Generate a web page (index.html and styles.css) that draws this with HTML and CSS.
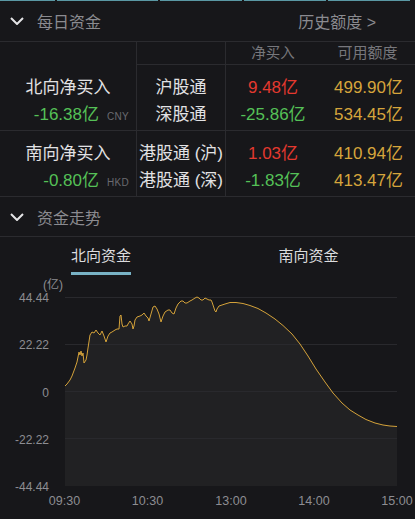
FILE: index.html
```html
<!DOCTYPE html>
<html lang="zh-CN">
<head>
<meta charset="utf-8">
<title>每日资金</title>
<link rel="stylesheet" href="styles.css">
</head>
<body>
<div class="topline"><i></i><i></i><i></i><i></i><i></i></div>

<div class="sec-head">
  <svg class="chev" width="14" height="8" viewBox="0 0 14 8"><path d="M1 1 L7 7 L13 1" fill="none" stroke="#e4e4e6" stroke-width="2" stroke-linejoin="miter"/></svg>
  <span class="sec-title">每日资金</span>
  <span class="sec-link">历史额度 &gt;</span>
</div>

<div class="table">
  <div class="c c1 hd"></div>
  <div class="c c2 hd bb"></div>
  <div class="c c3 hd bb">净买入</div>
  <div class="c c4 hd bb">可用额度</div>

  <div class="c c1 bb">
    <div class="ln">北向净买入</div>
    <div class="ln net"><span class="green">-16.38亿</span><span class="cur">CNY</span></div>
  </div>
  <div class="c c2 bb">
    <div class="ln">沪股通</div>
    <div class="ln">深股通</div>
  </div>
  <div class="c c3 bb">
    <div class="ln red">9.48亿</div>
    <div class="ln green">-25.86亿</div>
  </div>
  <div class="c c4 bb">
    <div class="ln gold">499.90亿</div>
    <div class="ln gold">534.45亿</div>
  </div>

  <div class="c c1 bb">
    <div class="ln">南向净买入</div>
    <div class="ln net"><span class="green">-0.80亿</span><span class="cur">HKD</span></div>
  </div>
  <div class="c c2 bb">
    <div class="ln">港股通 (沪)</div>
    <div class="ln">港股通 (深)</div>
  </div>
  <div class="c c3 bb">
    <div class="ln red">1.03亿</div>
    <div class="ln green">-1.83亿</div>
  </div>
  <div class="c c4 bb">
    <div class="ln gold">410.94亿</div>
    <div class="ln gold">413.47亿</div>
  </div>
</div>

<div class="sec-head sec-head2">
  <svg class="chev" width="14" height="8" viewBox="0 0 14 8"><path d="M1 1 L7 7 L13 1" fill="none" stroke="#e4e4e6" stroke-width="2"/></svg>
  <span class="sec-title">资金走势</span>
</div>

<div class="tabs">
  <div class="tab"><span class="tab-txt active">北向资金</span></div>
  <div class="tab"><span class="tab-txt">南向资金</span></div>
</div>

<svg class="chart" width="415" height="244" viewBox="0 275 415 244">
  <polygon class="area" points="65,386 67,384 70,380 72,376 75,368 77,362 79,352 80,355 81,351 82,356 83,353 84,363 86,360 87,355 88,348 90,335 92,332 94,333 96,330 98,333 100,335 102,331 104,336 106,342 108,336 110,333 112,332 115,330 117,329 119,329 120,316 121,315 122,324 123,327 125,326 127,326 128,324 130,321 132,324 133,329 134,326 135,320 137,317 140,316 142,315 144,313 146,316 148,318 149,321 151,314 153,307 155,306 157,309 159,314 160,318 161,322 163,316 165,312 168,310 170,310 172,313 174,314 176,308 178,304 181,301 183,301 185,303 187,303 190,301 192,300 195,298 197,297 199,298 201,300 203,300 205,298 207,299 209,300 211,300 212,302 213,305 215,311 216,312 217,309 219,306 222,305 225,304 230,302.5 236,302.5 243,303.5 250,305.5 258,308.5 266,313 275,319 283,325.5 292,334 300,344 308,356 316,369 325,382 333,393 342,403 350,410 358,415 366,419.5 375,423 383,425 390,426 397,426.5 397,486 65,486"/>
  <g class="grid">
    <line x1="65" y1="297.5" x2="397" y2="297.5"/>
    <line x1="65" y1="344.5" x2="397" y2="344.5"/>
    <line x1="65" y1="391.5" x2="397" y2="391.5"/>
    <line x1="65" y1="438.5" x2="397" y2="438.5"/>
  </g>
  <polyline class="curve" points="65,386 67,384 70,380 72,376 75,368 77,362 79,352 80,355 81,351 82,356 83,353 84,363 86,360 87,355 88,348 90,335 92,332 94,333 96,330 98,333 100,335 102,331 104,336 106,342 108,336 110,333 112,332 115,330 117,329 119,329 120,316 121,315 122,324 123,327 125,326 127,326 128,324 130,321 132,324 133,329 134,326 135,320 137,317 140,316 142,315 144,313 146,316 148,318 149,321 151,314 153,307 155,306 157,309 159,314 160,318 161,322 163,316 165,312 168,310 170,310 172,313 174,314 176,308 178,304 181,301 183,301 185,303 187,303 190,301 192,300 195,298 197,297 199,298 201,300 203,300 205,298 207,299 209,300 211,300 212,302 213,305 215,311 216,312 217,309 219,306 222,305 225,304 230,302.5 236,302.5 243,303.5 250,305.5 258,308.5 266,313 275,319 283,325.5 292,334 300,344 308,356 316,369 325,382 333,393 342,403 350,410 358,415 366,419.5 375,423 383,425 390,426 397,426.5"/>
  <g class="ylab">
    <text x="63" y="289">(亿)</text>
    <text x="49" y="302">44.44</text>
    <text x="49" y="349">22.22</text>
    <text x="49" y="397">0</text>
    <text x="49" y="444">-22.22</text>
    <text x="49" y="491">-44.44</text>
  </g>
  <g class="xlab">
    <text x="64.5" y="505">09:30</text>
    <text x="147.5" y="505">10:30</text>
    <text x="231" y="505">13:00</text>
    <text x="314" y="505">14:00</text>
    <text x="397" y="505">15:00</text>
  </g>
</svg>
</body>
</html>
```

FILE: styles.css
```css
html, body {
  margin: 0;
  padding: 0;
  background: #17171a;
}
body {
  width: 415px;
  height: 519px;
  overflow: hidden;
  font-family: "Liberation Sans", "Noto Sans CJK SC", sans-serif;
  color: #e2e2e4;
}

.topline {
  display: flex;
  gap: 2px;
  height: 1px;
  padding-right: 5px;
}
.topline i {
  display: block;
  flex: 1;
  background: #5a98a4;
}
.topline i:first-child { flex: 0 0 55px; }
.topline i:nth-child(2) { flex: 0 0 101px; }
.topline i:nth-child(3) { flex: 0 0 82px; }
.topline i:nth-child(4) { flex: 0 0 82px; }

.sec-head {
  display: flex;
  align-items: center;
  height: 40px;
  border-bottom: 1px solid #2b2b2f;
  padding-left: 10px;
}
.sec-head2 { height: 39px; }
.chev {
  display: block;
  flex: none;
  margin-right: 13px;
}
.sec-title {
  font-size: 16px;
  color: #8b8b90;
  flex: 1;
}
.sec-link {
  font-size: 16px;
  color: #8b8b90;
  margin-right: 39px;
}

.table {
  display: grid;
  grid-template-columns: 137px 89px 94px 1fr;
  grid-template-rows: 23px 66px 66px;
}
.c {
  box-sizing: border-box;
  text-align: center;
}
.c1, .c2 { border-right: 1px solid #2b2b2f; }
.bb { border-bottom: 1px solid #2b2b2f; }
.hd {
  font-size: 14.5px;
  line-height: 22px;
  color: #77777c;
}
.c4.hd { font-size: 15px; }
.c:not(.hd) { padding-top: 9px; }
.ln {
  font-size: 17px;
  line-height: 27px;
  white-space: nowrap;
}
.net {
  display: flex;
  justify-content: flex-end;
  align-items: baseline;
  gap: 8px;
  padding-right: 7px;
}
.cur {
  font-size: 10px;
  color: #6a6a70;
  letter-spacing: 0.3px;
}
.red { color: #e4392f; }
.green { color: #55c157; }
.gold { color: #d6a53c; }
.c4 .ln { padding-left: 2px; }

.tabs {
  display: grid;
  grid-template-columns: 202px 1fr;
  height: 38px;
}
.tab { text-align: center; }
.tab-txt {
  display: inline-block;
  font-size: 15px;
  line-height: 22px;
  padding-top: 8px;
  padding-bottom: 5px;
  color: #dcdcde;
  border-bottom: 3px solid transparent;
}
.tab-txt.active { border-bottom-color: #78b2c5; }

.chart { display: block; }
.area { fill: #212123; }
.grid line { stroke: #29292d; stroke-width: 1; }
.curve {
  fill: none;
  stroke: #d4a23a;
  stroke-width: 1;
  stroke-linejoin: round;
}
.ylab text {
  font-family: "Liberation Sans", "Noto Sans CJK SC", sans-serif;
  font-size: 12px;
  fill: #8d8d92;
  text-anchor: end;
}
.xlab text {
  font-family: "Liberation Sans", sans-serif;
  font-size: 12.5px;
  fill: #8d8d92;
  text-anchor: middle;
}
```
